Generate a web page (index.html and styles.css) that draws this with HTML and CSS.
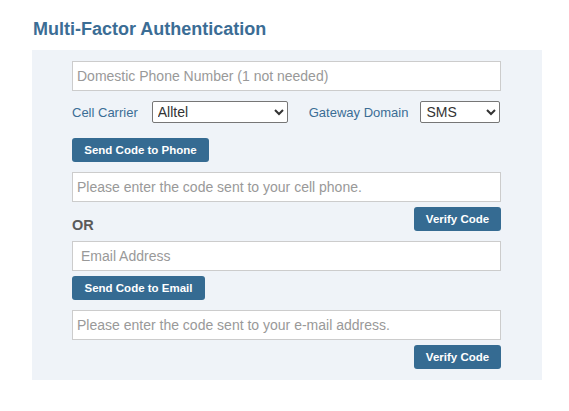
FILE: index.html
```html
<!DOCTYPE html>
<html lang="en">
<head>
<meta charset="utf-8">
<title>Multi-Factor Authentication</title>
<link rel="stylesheet" href="styles.css">
</head>
<body>
<h2 class="title">Multi-Factor Authentication</h2>
<div class="panel">
  <input class="field" type="text" placeholder="Domestic Phone Number (1 not needed)">
  <div class="select-row">
    <label class="lbl">Cell Carrier</label>
    <select class="sel sel-carrier"><option>Alltel</option></select>
    <label class="lbl lbl-gw">Gateway Domain</label>
    <select class="sel sel-gw"><option>SMS</option></select>
  </div>
  <div class="btn-row"><button class="btn btn-phone">Send Code to Phone</button></div>
  <input class="field field-code" type="text" placeholder="Please enter the code sent to your cell phone.">
  <div class="verify-row">
    <span class="or">OR</span>
    <button class="btn btn-verify">Verify Code</button>
  </div>
  <input class="field field-email" type="text" placeholder="Email Address">
  <div class="btn-row btn-row-email"><button class="btn btn-email">Send Code to Email</button></div>
  <input class="field field-code" type="text" placeholder="Please enter the code sent to your e-mail address.">
  <div class="verify-row verify-end">
    <button class="btn btn-verify">Verify Code</button>
  </div>
</div>
</body>
</html>
```
FILE: styles.css
```css
* { box-sizing: border-box; }
body {
  margin: 0;
  padding: 19px 27px 0 32px;
  background: #ffffff;
  font-family: "Liberation Sans", Arial, sans-serif;
}
.title {
  margin: 0 0 11px 1px;
  font-size: 18px;
  line-height: 20px;
  font-weight: bold;
  color: #3b6d95;
}
.panel {
  background: #eff3f8;
  padding: 11px 41px 11px 40px;
  display: flex;
  flex-direction: column;
}
.field {
  display: block;
  width: 100%;
  height: 30px;
  border: 1px solid #cccccc;
  background: #ffffff;
  padding: 0 4px;
  font-family: "Liberation Sans", Arial, sans-serif;
  font-size: 14px;
  color: #333;
  outline: none;
}
.field::placeholder { color: #999999; }
.field-email { padding: 0 8px; }
.select-row {
  display: flex;
  align-items: center;
  margin-top: 10px;
  height: 22px;
}
.lbl {
  font-size: 13px;
  color: #3b6d95;
}
.sel {
  height: 22px;
  font-family: "Liberation Sans", Arial, sans-serif;
  font-size: 14px;
  color: #333;
  border: 1px solid #767676;
  border-radius: 2px;
  background: #ffffff;
  padding: 0 0 0 1px;
}
.sel-carrier { width: 136px; margin-left: 14px; }
.lbl-gw { margin-left: 21px; }
.sel-gw { width: 80px; margin-left: 12px; }
.btn-row { margin-top: 15px; margin-bottom: 10px; }
.btn-row-email { margin-top: 5px; }
.btn {
  height: 24px;
  border: none;
  border-radius: 3px;
  background: #356b92;
  color: #ffffff;
  font-family: "Liberation Sans", Arial, sans-serif;
  font-size: 11.5px;
  font-weight: bold;
  padding: 0 12px;
  cursor: pointer;
}
.btn-phone { width: 137px; }
.btn-email { width: 133px; }
.btn-verify { width: 87px; padding: 0; }
.verify-row {
  display: flex;
  justify-content: space-between;
  align-items: flex-end;
  margin-top: 5px;
  margin-bottom: 10px;
}
.verify-end { justify-content: flex-end; margin-bottom: 0; }
.or {
  font-size: 14.5px;
  font-weight: bold;
  color: #5a5a5a;
  line-height: 14px;
  margin-bottom: -1px;
}
```
